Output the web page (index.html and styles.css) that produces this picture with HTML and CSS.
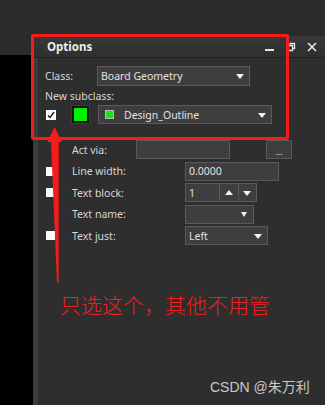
FILE: index.html
```html
<!DOCTYPE html>
<html>
<head>
<meta charset="utf-8">
<link rel="stylesheet" href="styles.css">
</head>
<body>
<div class="screen">
  <div class="topbar"></div>
  <div class="main">
    <div class="side"><div class="side-black"></div></div>
    <div class="panel">
      <div class="title">
        <span class="title-text">Options</span>
        <div class="title-icons">
          <svg class="ti" width="10" height="10" viewBox="0 0 10 10"><rect x="0" y="7" width="9" height="2" fill="#e6e6e6"/></svg>
          <svg class="ti" width="10" height="10" viewBox="0 0 10 10"><path d="M3.5 1.5h5v5h-1.5M1.5 3.5h5v5h-5z" fill="none" stroke="#e6e6e6" stroke-width="1.3"/></svg>
          <svg class="ti" width="10" height="10" viewBox="0 0 10 10"><path d="M1 1L9 9M9 1L1 9" stroke="#e6e6e6" stroke-width="1.6"/></svg>
        </div>
      </div>
      <div class="body">
        <div class="row row-class">
          <span class="lbl lbl-class">Class:</span>
          <div class="select sel-class"><span>Board Geometry</span><i class="tri"></i></div>
        </div>
        <div class="row row-newsub"><span class="lbl">New subclass:</span></div>
        <div class="row row-sub">
          <span class="cb cb-checked"><svg width="8" height="8" viewBox="0 0 8 8"><path d="M1 4.5L3 6.5L7 1" fill="none" stroke="#111" stroke-width="1.3"/></svg></span>
          <span class="swatch"></span>
          <div class="select sel-sub"><span class="mini-sw"></span><span>Design_Outline</span><i class="tri"></i></div>
        </div>
        <div class="props">
          <div class="prow">
            <span class="cb-slot"></span>
            <span class="lbl lbl-act">Act via:</span>
            <div class="field f-act"></div>
            <div class="btn-dots">...</div>
          </div>
          <div class="prow">
            <span class="cb-slot"><span class="cb"></span></span>
            <span class="lbl lbl-wide">Line width:</span>
            <div class="field f-line">0.0000</div>
          </div>
          <div class="prow">
            <span class="cb-slot"><span class="cb"></span></span>
            <span class="lbl lbl-wide">Text block:</span>
            <div class="spin">
              <div class="field f-spin">1</div>
              <div class="spin-btn sb-up"><i class="tri tri-up"></i></div>
              <div class="spin-btn sb-down"><i class="tri"></i></div>
            </div>
          </div>
          <div class="prow">
            <span class="cb-slot"></span>
            <span class="lbl lbl-wide">Text name:</span>
            <div class="select sel-name"><span></span><i class="tri tri-sm"></i></div>
          </div>
          <div class="prow">
            <span class="cb-slot"><span class="cb"></span></span>
            <span class="lbl lbl-wide">Text just:</span>
            <div class="select sel-just"><span>Left</span><i class="tri"></i></div>
          </div>
        </div>
      </div>
    </div>
  </div>

  <div class="callout-box"></div>
  <svg class="arrow" width="325" height="405" viewBox="0 0 325 405">
    <polygon points="54.5,127 47.5,142 51,142 57,283 58.6,283 58.8,142 62,142" fill="#f71c1c"/>
  </svg>
  <div class="note">只选这个，其他不用管</div>
  <div class="watermark">CSDN @朱万利</div>
</div>
</body>
</html>
```
FILE: styles.css
```css
* { box-sizing: border-box; }
html, body { margin: 0; padding: 0; }
body {
  background: #2b2b2b;
  font-family: "Noto Sans", "Open Sans", sans-serif;
  font-size: 10.5px;
  color: #d9d9d9;
}
.screen {
  position: relative;
  width: 325px;
  height: 405px;
  overflow: hidden;
  display: flex;
  flex-direction: column;
  background: #2b2b2b;
}
.topbar { height: 36px; flex: none; }
.main { flex: 1; display: flex; }
.side { width: 33px; flex: none; padding-top: 19px; display: flex; flex-direction: column; }
.side-black { flex: 1; background: #000; }
.panel { flex: 1; display: flex; flex-direction: column; }
.title {
  height: 22px;
  flex: none;
  display: flex;
  align-items: center;
  padding-left: 14px;
  background: linear-gradient(#383838, #2f2f2f);
  border-bottom: 1px solid #222;
}
.title-text { font-weight: 700; font-size: 11.5px; color: #ececec; flex: 1; }
.title-icons { display: flex; gap: 11px; padding-right: 8px; align-items: center; }
.ti { display: block; }
.body {
  flex: 1;
  background: #2e2e2e;
  border-left: 5px solid #3c3c3c;
  padding: 8px 0 0 7px;
}
.row { display: flex; align-items: center; }
.row-class { height: 20px; }
.lbl { color: #d6d6d6; white-space: nowrap; }
.lbl-class { width: 52px; }
.row-newsub { height: 19px; }
.row-sub { height: 19px; }
.select {
  position: relative;
  height: 100%;
  background: #3e3e3e;
  border: 1px solid #5a5a5a;
  display: flex;
  align-items: center;
  padding-left: 3px;
  color: #e2e2e2;
}
.sel-class { width: 153px; }
.sel-sub { width: 174px; margin-left: 9px; padding-left: 6px; }
.tri {
  position: absolute;
  right: 5px;
  top: 50%;
  margin-top: -2px;
  width: 0; height: 0;
  border-left: 4.5px solid transparent;
  border-right: 4.5px solid transparent;
  border-top: 5px solid #f2f2f2;
}
.tri-sm { border-left-width: 3.5px; border-right-width: 3.5px; right: 6px; }
.tri-up { border-top: 0; border-bottom: 5px solid #f2f2f2; margin-top: -3px; }
.cb {
  display: block;
  width: 9px; height: 9px;
  background: #fafafa;
}
.cb-checked {
  width: 10px; height: 10px;
  margin-left: 1px;
  display: flex; align-items: center; justify-content: center;
}
.cb-checked svg { display: block; }
.swatch {
  width: 17px; height: 17px;
  margin-left: 16px;
  background: #00f000;
  border: 2px solid #141414;
  box-shadow: 0 0 0 1px #3a3a3a;
}
.mini-sw {
  width: 9px; height: 9px;
  background: #1ee01e;
  border: 1px solid #bdbdbd;
  margin-right: 10px;
}
.props {
  margin-top: 16px;
  display: flex;
  flex-direction: column;
  gap: 2.5px;
}
.prow { display: flex; align-items: center; height: 19px; }
.cb-slot { width: 27px; flex: none; padding-left: 1px; }
.lbl-act { width: 64px; }
.lbl-wide { width: 113px; }
.field {
  height: 100%;
  background: #3e3e3e;
  border: 1px solid #5a5a5a;
  padding-left: 3px;
  display: flex;
  align-items: center;
  color: #e2e2e2;
}
.f-act { width: 94px; }
.btn-dots {
  width: 26px; height: 100%;
  margin-left: 36px;
  background: #3e3e3e;
  border: 1px solid #5a5a5a;
  display: flex; align-items: flex-end; justify-content: center;
  line-height: 12px; font-size: 9px; color: #e2e2e2;
}
.f-line { width: 94px; }
.spin { display: flex; height: 100%; }
.f-spin { width: 35px; }
.spin-btn {
  position: relative;
  height: 100%;
  background: #3e3e3e;
  border: 1px solid #5a5a5a;
  border-left: 0;
}
.sb-up { width: 19px; }
.sb-down { width: 18px; }
.spin-btn .tri { right: auto; left: 50%; margin-left: -4.5px; }
.sel-name { width: 69px; }
.sel-just { width: 83px; }

.callout-box {
  position: absolute;
  left: 31px; top: 34px;
  width: 258px; height: 106px;
  border: 3px solid #f71c1c;
  border-radius: 2px;
}
.arrow { position: absolute; left: 0; top: 0; }
.note {
  position: absolute;
  left: 60px; top: 292px;
  font-family: "Noto Sans CJK SC", sans-serif;
  font-weight: 300;
  font-size: 21px;
  line-height: 24px;
  color: #f21d1d;
  white-space: nowrap;
}
.watermark {
  position: absolute;
  left: 210px; top: 379px;
  font-family: "Liberation Sans", "Noto Sans CJK SC", sans-serif;
  font-size: 14px;
  line-height: 16px;
  color: #c9c9c9;
  white-space: nowrap;
}
```
